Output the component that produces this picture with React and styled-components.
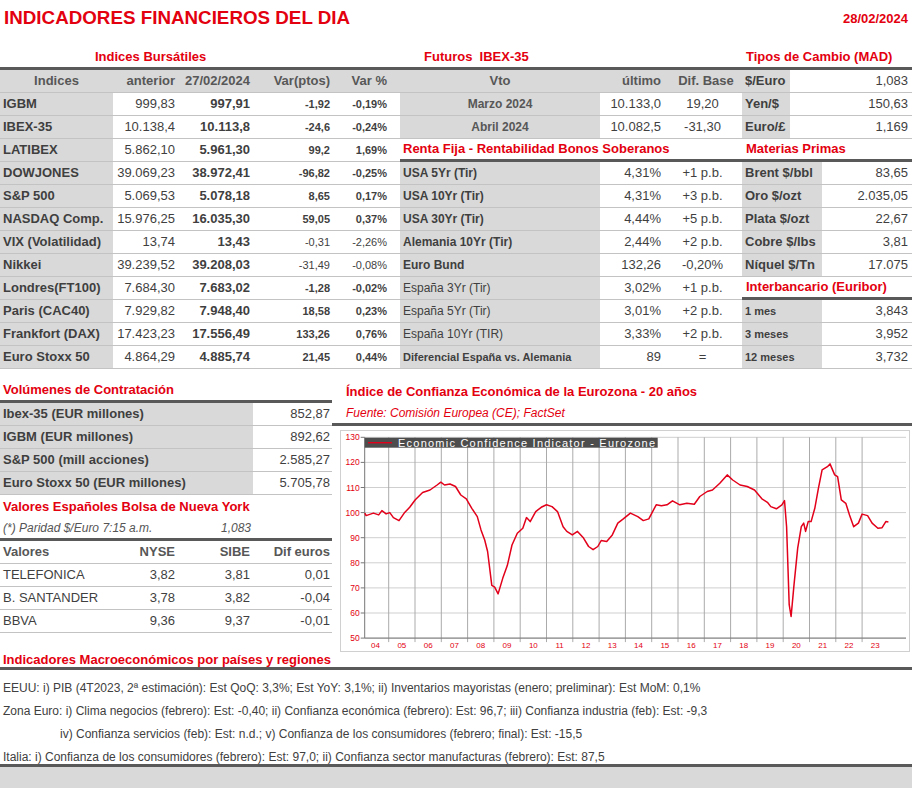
import styled, { createGlobalStyle } from "styled-components";

const RED = "#e3000f";
const GREY = "#d9d9d9";
const LINE = "#c3c3c3";
const RULE = "#595959";
const INK = "#3f3f3f";

const GlobalStyle = createGlobalStyle`
  body {
    margin: 0;
    background: #fff;
    font-family: "Liberation Sans", Arial, sans-serif;
    color: ${INK};
  }
`;

// Data
const indices = [
  ["IGBM", "999,83", "997,91", "-1,92", "-0,19%"],
  ["IBEX-35", "10.138,4", "10.113,8", "-24,6", "-0,24%"],
  ["LATIBEX", "5.862,10", "5.961,30", "99,2", "1,69%"],
  ["DOWJONES", "39.069,23", "38.972,41", "-96,82", "-0,25%"],
  ["S&P 500", "5.069,53", "5.078,18", "8,65", "0,17%"],
  ["NASDAQ Comp.", "15.976,25", "16.035,30", "59,05", "0,37%"],
  ["VIX (Volatilidad)", "13,74", "13,43", "-0,31", "-2,26%", true],
  ["Nikkei", "39.239,52", "39.208,03", "-31,49", "-0,08%", true],
  ["Londres(FT100)", "7.684,30", "7.683,02", "-1,28", "-0,02%"],
  ["Paris (CAC40)", "7.929,82", "7.948,40", "18,58", "0,23%"],
  ["Frankfort (DAX)", "17.423,23", "17.556,49", "133,26", "0,76%"],
  ["Euro Stoxx 50", "4.864,29", "4.885,74", "21,45", "0,44%"],
];

const futuros = [
  ["Marzo 2024", "10.133,0", "19,20"],
  ["Abril 2024", "10.082,5", "-31,30"],
];

const renta = [
  ["USA 5Yr (Tir)", "4,31%", "+1 p.b."],
  ["USA 10Yr (Tir)", "4,31%", "+3 p.b."],
  ["USA 30Yr (Tir)", "4,44%", "+5 p.b."],
  ["Alemania 10Yr (Tir)", "2,44%", "+2 p.b."],
  ["Euro Bund", "132,26", "-0,20%"],
  ["España 3Yr (Tir)", "3,02%", "+1 p.b.", true],
  ["España 5Yr (Tir)", "3,01%", "+2 p.b.", true],
  ["España 10Yr (TIR)", "3,33%", "+2 p.b.", true],
  ["Diferencial España vs. Alemania", "89", "=", false, 11],
];

const tipos = [
  ["Yen/$", "150,63"],
  ["Euro/£", "1,169"],
];

const materias = [
  ["Brent $/bbl", "83,65"],
  ["Oro $/ozt", "2.035,05"],
  ["Plata $/ozt", "22,67"],
  ["Cobre $/lbs", "3,81"],
  ["Níquel $/Tn", "17.075"],
];

const euribor = [
  ["1 mes", "3,843"],
  ["3 meses", "3,952"],
  ["12 meses", "3,732"],
];

const volumenes = [
  ["Ibex-35 (EUR millones)", "852,87"],
  ["IGBM (EUR millones)", "892,62"],
  ["S&P 500 (mill acciones)", "2.585,27"],
  ["Euro Stoxx 50 (EUR millones)", "5.705,78"],
];

const nueva = [
  ["TELEFONICA", "3,82", "3,81", "0,01"],
  ["B. SANTANDER", "3,78", "3,82", "-0,04"],
  ["BBVA", "9,36", "9,37", "-0,01"],
];

const macro = [
  ["EEUU: i) PIB (4T2023, 2ª estimación): Est QoQ: 3,3%; Est YoY: 3,1%; ii) Inventarios mayoristas (enero; preliminar): Est MoM: 0,1%", 0],
  ["Zona Euro: i) Clima negocios (febrero): Est: -0,40; ii) Confianza económica (febrero): Est: 96,7; iii) Confianza industria (feb): Est: -9,3", 0],
  ["iv) Confianza servicios (feb): Est: n.d.; v) Confianza de los consumidores (febrero; final): Est: -15,5", 57],
  ["Italia: i) Confianza de los consumidores (febrero): Est: 97,0; ii) Confianza sector manufacturas (febrero): Est: 87,5", 0],
];

// Economic sentiment, [years since Jan 2004, value]
const ecoData = [
  [0.09, 99.8], [0.14, 98.8], [0.42, 99.8], [0.62, 99.1], [0.74, 100.8], [0.9, 99.5],
  [1.04, 100.0], [1.18, 98.0], [1.39, 96.8], [1.59, 99.8], [1.8, 102.1], [2.01, 105.1],
  [2.29, 108.0], [2.57, 109.0], [2.84, 111.0], [2.98, 112.1], [3.12, 111.0], [3.33, 111.4],
  [3.54, 110.4], [3.74, 107.0], [3.95, 105.5], [4.16, 101.7], [4.37, 98.4], [4.51, 93.1],
  [4.65, 89.1], [4.76, 84.5], [4.92, 71.0], [5.03, 70.3], [5.16, 67.6], [5.34, 73.9],
  [5.51, 78.9], [5.69, 87.1], [5.89, 91.8], [6.1, 93.8], [6.24, 98.0], [6.38, 96.4],
  [6.59, 100.4], [6.8, 102.1], [7.0, 103.1], [7.21, 102.4], [7.42, 100.4], [7.63, 94.4],
  [7.77, 92.5], [7.98, 91.1], [8.18, 92.5], [8.39, 90.1], [8.6, 86.5], [8.77, 85.2],
  [8.95, 86.5], [9.08, 88.9], [9.29, 88.5], [9.5, 91.1], [9.71, 95.8], [9.92, 97.5],
  [10.19, 99.8], [10.47, 98.4], [10.68, 96.8], [10.89, 97.5], [11.17, 103.1], [11.37, 102.7],
  [11.58, 103.1], [11.79, 104.7], [12.07, 103.1], [12.34, 103.7], [12.62, 103.3], [12.83, 106.4],
  [13.11, 108.4], [13.31, 109.0], [13.59, 111.7], [13.87, 115.0], [14.08, 113.0], [14.36, 111.0],
  [14.63, 110.4], [14.91, 109.0], [15.19, 105.5], [15.4, 104.1], [15.53, 102.4], [15.74, 101.5],
  [15.95, 103.1], [16.05, 104.8], [16.13, 94.4], [16.23, 63.3], [16.3, 58.6], [16.41, 71.2],
  [16.55, 85.8], [16.69, 94.4], [16.78, 95.8], [16.85, 92.5], [16.95, 96.4], [17.06, 96.4],
  [17.2, 101.7], [17.34, 109.7], [17.48, 117.0], [17.68, 118.3], [17.78, 119.4], [17.96, 115.0],
  [18.07, 114.3], [18.21, 105.1], [18.38, 103.7], [18.52, 99.1], [18.68, 94.4], [18.86, 95.8],
  [19.0, 99.4], [19.21, 98.8], [19.38, 95.8], [19.6, 93.8], [19.76, 94.0], [19.9, 96.4],
  [20.0, 96.2],
];

const App = () => (
  <Page>
    <GlobalStyle />
    <TopBar>
      <Title>INDICADORES FINANCIEROS DEL DIA</Title>
      <DateLabel>28/02/2024</DateLabel>
    </TopBar>

    <TopBlock>
      <Panel $w={400}>
        <SectionTitle $indent={95}>Indices Bursátiles</SectionTitle>
        <Row $cols="113px 65px 75px 80px 67px">
          <Cell $shade $bold $muted $align="center">Indices</Cell>
          <Cell $shade $bold $muted $align="right">anterior</Cell>
          <Cell $shade $bold $muted $align="right">27/02/2024</Cell>
          <Cell $shade $bold $muted $align="right">Var(ptos)</Cell>
          <Cell $shade $bold $muted $align="right" $pr={13}>Var %</Cell>
        </Row>
        {indices.map(([name, prev, last, pts, pct, light]) => (
          <Row key={name} $cols="113px 65px 75px 80px 67px">
            <Cell $shade $bold>{name}</Cell>
            <Cell $align="right">{prev}</Cell>
            <Cell $align="right" $bold>{last}</Cell>
            <Cell $align="right" $bold={!light} $size={11}>{pts}</Cell>
            <Cell $align="right" $bold={!light} $size={11} $pr={13}>{pct}</Cell>
          </Row>
        ))}
      </Panel>

      <Panel $w={342}>
        <SectionTitle $indent={24}>Futuros&nbsp; IBEX-35</SectionTitle>
        <Row $cols="200px 63px 79px">
          <Cell $shade $bold $muted $align="center">Vto</Cell>
          <Cell $shade $bold $muted $align="right" $pr={2}>último</Cell>
          <Cell $shade $bold $muted $align="center" $pl={10}>Dif. Base</Cell>
        </Row>
        {futuros.map(([vto, last, dif]) => (
          <Row key={vto} $cols="200px 63px 79px">
            <Cell $shade $bold $muted $align="center" $size={12}>{vto}</Cell>
            <Cell $align="right" $pr={2}>{last}</Cell>
            <Cell $align="center">{dif}</Cell>
          </Row>
        ))}
        <SectionTitle $indent={3}>Renta Fija - Rentabilidad Bonos Soberanos</SectionTitle>
        {renta.map(([name, val, chg, light, size]) => (
          <Row key={name} $cols="200px 63px 79px">
            <Cell $shade $bold={!light} $size={size || 12}>{name}</Cell>
            <Cell $align="right" $pr={2}>{val}</Cell>
            <Cell $align="center">{chg}</Cell>
          </Row>
        ))}
      </Panel>

      <Panel $w={170}>
        <SectionTitle $indent={4}>Tipos de Cambio (MAD)</SectionTitle>
        <Row $cols="48px 122px">
          <Cell $shade $bold>$/Euro</Cell>
          <Cell $align="right" $pr={4}>1,083</Cell>
        </Row>
        {tipos.map(([name, val]) => (
          <Row key={name} $cols="48px 122px">
            <Cell $shade $bold>{name}</Cell>
            <Cell $align="right" $pr={4}>{val}</Cell>
          </Row>
        ))}
        <SectionTitle $indent={4}>Materias Primas</SectionTitle>
        {materias.map(([name, val]) => (
          <Row key={name} $cols="80px 90px">
            <Cell $shade $bold>{name}</Cell>
            <Cell $align="right" $pr={4}>{val}</Cell>
          </Row>
        ))}
        <SectionTitle $indent={4}>Interbancario (Euribor)</SectionTitle>
        {euribor.map(([name, val]) => (
          <Row key={name} $cols="80px 90px">
            <Cell $shade $bold $size={11}>{name}</Cell>
            <Cell $align="right" $pr={4}>{val}</Cell>
          </Row>
        ))}
      </Panel>
    </TopBlock>

    <MidBlock>
      <Panel $w={332}>
        <SectionTitle $indent={3} $top={11}>Volúmenes de Contratación</SectionTitle>
        {volumenes.map(([name, val]) => (
          <Row key={name} $cols="253px 79px">
            <Cell $shade $bold>{name}</Cell>
            <Cell $align="right" $pr={2}>{val}</Cell>
          </Row>
        ))}
        <PlainTitle>Valores Españoles Bolsa de Nueva York</PlainTitle>
        <Note>
          <span>(*) Paridad $/Euro 7:15 a.m.</span>
          <span>1,083</span>
        </Note>
        <Row $cols="113px 65px 75px 79px">
          <Cell $bold $muted>Valores</Cell>
          <Cell $bold $muted $align="right">NYSE</Cell>
          <Cell $bold $muted $align="right">SIBE</Cell>
          <Cell $bold $muted $align="right" $pr={2}>Dif euros</Cell>
        </Row>
        {nueva.map(([name, nyse, sibe, dif]) => (
          <Row key={name} $cols="113px 65px 75px 79px">
            <Cell>{name}</Cell>
            <Cell $align="right">{nyse}</Cell>
            <Cell $align="right">{sibe}</Cell>
            <Cell $align="right" $pr={2}>{dif}</Cell>
          </Row>
        ))}
      </Panel>

      <ChartColumn>
        <ChartTitle>Índice de Confianza Económica de la Eurozona - 20 años</ChartTitle>
        <ChartSource>Fuente: Comisión Europea (CE); FactSet</ChartSource>
        <Rule />
        <ChartFrame>
          <EcoChart />
        </ChartFrame>
      </ChartColumn>
    </MidBlock>

    <SectionTitle $indent={3} $h={15} $lh={15}>
      Indicadores Macroeconómicos por países y regiones
    </SectionTitle>
    <MacroList>
      {macro.map(([text, indent]) => (
        <MacroLine key={text} $indent={indent}>{text}</MacroLine>
      ))}
    </MacroList>
    <Footer />
  </Page>
);

export default App;

const EcoChart = () => {
  const X = (t) => 21.4 + t * 26.3;
  const Y = (v) => 6.3 + (130 - v) * 2.51;
  const left = 23.7;
  const right = 565;
  const path = ecoData
    .map(([t, v], i) => `${i ? "L" : "M"}${X(t).toFixed(1)},${Y(v).toFixed(1)}`)
    .join(" ");
  const levels = [130, 120, 110, 100, 90, 80, 70, 60, 50];
  const years = Array.from({ length: 20 }, (_, i) => i);

  return (
    <svg width="568" height="220" viewBox="0 0 568 220">
      {levels.map((v) => (
        <g key={v}>
          <line x1={left} x2={right} y1={Y(v)} y2={Y(v)} stroke="#cfcfcf" strokeWidth="1" />
          <line x1={left - 4} x2={left} y1={Y(v)} y2={Y(v)} stroke="#777" strokeWidth="1" />
          <text x={left - 5} y={Y(v) + 3} fontSize="8.5" fill={RED} textAnchor="end" fontFamily="Liberation Sans, Arial, sans-serif">
            {v}
          </text>
        </g>
      ))}
      {years.map((k) => (
        <g key={k}>
          {k > 0 && (
            <line x1={X(k)} x2={X(k)} y1={Y(130)} y2={Y(50) + 4} stroke="#ababab" strokeWidth="1" />
          )}
          <text x={X(k + 0.5)} y="217" fontSize="8" fill={RED} textAnchor="middle" fontFamily="Liberation Sans, Arial, sans-serif">
            {String(4 + k).padStart(2, "0")}
          </text>
        </g>
      ))}
      <line x1={left} x2={left} y1={Y(130)} y2={Y(50)} stroke="#777" strokeWidth="1" />
      <line x1={left} x2={right} y1={Y(50)} y2={Y(50)} stroke="#777" strokeWidth="1" />
      <path d={path} fill="none" stroke="#e2001a" strokeWidth="1.5" strokeLinejoin="round" />
      <rect x={left} y="6.7" width="293" height="10" fill="#4d4d4d" />
      <line x1="27" x2="51" y1="11.7" y2="11.7" stroke="#e2001a" strokeWidth="1.4" />
      <text x="57" y="15.6" fontSize="11" fill="#fff" textLength="257" lengthAdjust="spacing" fontFamily="Liberation Sans, Arial, sans-serif">
        Economic Confidence Indicator - Eurozone
      </text>
    </svg>
  );
};

const Page = styled.div`
  width: 912px;
`;

const TopBar = styled.header`
  display: flex;
  justify-content: space-between;
  align-items: center;
  height: 47px;
  padding: 0 4px 11px 4px;
  box-sizing: border-box;
`;

const Title = styled.h1`
  margin: 0;
  font-size: 18.8px;
  font-weight: 700;
  color: ${RED};
  line-height: 22px;
`;

const DateLabel = styled.div`
  font-size: 13px;
  font-weight: 700;
  color: ${RED};
`;

const TopBlock = styled.div`
  display: flex;
`;

const MidBlock = styled.div`
  display: flex;
  align-items: flex-start;
`;

const Panel = styled.section`
  width: ${({ $w }) => $w}px;
  flex: none;
  display: flex;
  flex-direction: column;
`;

const SectionTitle = styled.h2`
  margin: ${({ $top }) => $top || 0}px 0 0 0;
  height: ${({ $h }) => $h || 20}px;
  line-height: ${({ $lh }) => $lh || 20}px;
  padding-left: ${({ $indent }) => $indent}px;
  border-bottom: 3px solid ${RULE};
  color: ${RED};
  font-size: 13px;
  font-weight: 700;
  white-space: nowrap;
`;

const PlainTitle = styled.h3`
  margin: 0;
  height: 23px;
  line-height: 23px;
  padding-left: 3px;
  color: ${RED};
  font-size: 13px;
  font-weight: 700;
`;

const Note = styled.div`
  display: flex;
  justify-content: space-between;
  width: 248px;
  height: 20px;
  line-height: 20px;
  padding: 0 81px 0 3px;
  font-size: 12px;
  font-style: italic;
  color: #555;
  border-bottom: 3px solid ${RULE};
`;

const Row = styled.div`
  display: grid;
  grid-template-columns: ${({ $cols }) => $cols};
  height: 23px;
  box-sizing: border-box;
  border-bottom: 1px solid ${LINE};
`;

const Cell = styled.div`
  background: ${({ $shade }) => ($shade ? GREY : "#fff")};
  text-align: ${({ $align }) => $align || "left"};
  font-weight: ${({ $bold }) => ($bold ? 700 : 400)};
  font-size: ${({ $size }) => $size || 13}px;
  color: ${({ $muted }) => ($muted ? "#575757" : INK)};
  padding: 0 ${({ $pr }) => $pr ?? 3}px 0 ${({ $pl }) => $pl ?? 3}px;
  line-height: 22px;
  white-space: nowrap;
  overflow: hidden;
`;

const ChartColumn = styled.div`
  flex: 1;
  display: flex;
  flex-direction: column;
`;

const ChartTitle = styled.div`
  margin-top: 15px;
  padding-left: 14px;
  line-height: 16px;
  font-size: 13px;
  font-weight: 700;
  color: ${RED};
`;

const ChartSource = styled.div`
  margin-top: 5px;
  padding-left: 14px;
  line-height: 16px;
  font-size: 12px;
  font-style: italic;
  color: ${RED};
`;

const Rule = styled.div`
  margin-top: 2px;
  height: 3px;
  background: ${RULE};
`;

const ChartFrame = styled.div`
  margin: 4px 0 0 8px;
  width: 570px;
  height: 222px;
  box-sizing: border-box;
  border: 1px solid #d0d0d0;
  background: #fff;
  svg {
    display: block;
  }
`;

const MacroList = styled.div`
  padding-top: 7px;
  height: 97px;
  box-sizing: border-box;
  border-bottom: 3px solid ${RULE};
`;

const MacroLine = styled.p`
  margin: 0;
  height: 23px;
  line-height: 23px;
  padding-left: ${({ $indent }) => 3 + $indent}px;
  font-size: 12px;
  color: #404040;
  white-space: nowrap;
`;

const Footer = styled.div`
  height: 24px;
  background: ${GREY};
`;
